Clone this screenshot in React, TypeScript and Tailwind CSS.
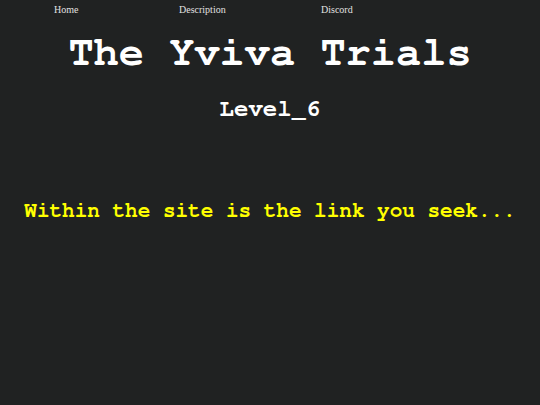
export default function App() {
  return (
    <div className="min-h-screen w-full bg-[#202222] text-white">
      <nav className="flex h-[20px] items-center pl-[54px] font-['Liberation_Serif',serif] text-[10px] leading-none text-[#e0e0e0]">
        <a className="w-[125px]">Home</a>
        <a className="w-[142px]">Description</a>
        <a>Discord</a>
      </nav>
      <div className="flex flex-col items-center font-['Nimbus_Mono_PS','FreeMono','Courier','Courier_New','Liberation_Mono',monospace] font-bold">
        <h1 className="mt-[11px] text-[42px] leading-[42px]">The Yviva Trials</h1>
        <h2 className="mt-[22px] text-[24px] leading-[28px]">Level_6</h2>
        <p className="mt-[76px] text-[21px] leading-[24px] text-[#ffff00]">
          Within the site is the link you seek...
        </p>
      </div>
    </div>
  );
}
